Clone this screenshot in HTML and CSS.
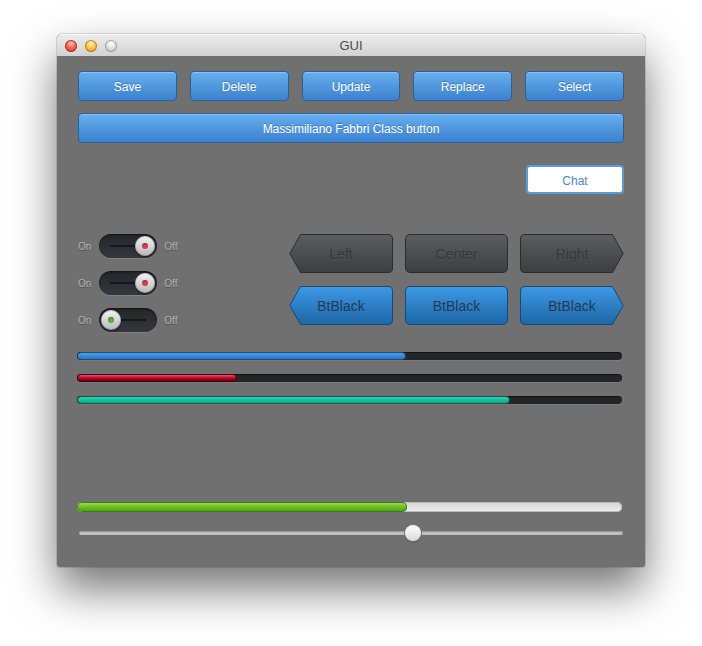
FILE: index.html
```html
<!DOCTYPE html>
<html>
<head>
<meta charset="utf-8">
<title>GUI</title>
<link rel="stylesheet" href="styles.css">
</head>
<body>
<div class="window">
  <div class="titlebar">
    <div class="lights">
      <span class="light red"></span>
      <span class="light yellow"></span>
      <span class="light grey"></span>
    </div>
    <div class="title">GUI</div>
    <div></div>
  </div>
  <div class="content">
    <div class="btn-row">
      <button class="btn">Save</button>
      <button class="btn">Delete</button>
      <button class="btn">Update</button>
      <button class="btn">Replace</button>
      <button class="btn">Select</button>
    </div>
    <button class="btn wide">Massimiliano Fabbri Class button</button>
    <div class="chat-row"><button class="chat">Chat</button></div>

    <div class="mid">
      <div class="toggles">
        <div class="trow">
          <span class="lbl on-lbl">On</span>
          <div class="switch off"><span class="line"></span><span class="knob"><span class="dot red-dot"></span></span></div>
          <span class="lbl off-lbl">Off</span>
        </div>
        <div class="trow">
          <span class="lbl on-lbl">On</span>
          <div class="switch off"><span class="line"></span><span class="knob"><span class="dot red-dot"></span></span></div>
          <span class="lbl off-lbl">Off</span>
        </div>
        <div class="trow">
          <span class="lbl on-lbl">On</span>
          <div class="switch on"><span class="knob"><span class="dot green-dot"></span></span><span class="line"></span></div>
          <span class="lbl off-lbl">Off</span>
        </div>
      </div>
      <div class="segs">
        <button class="seg dark left">Left</button>
        <button class="seg dark center">Center</button>
        <button class="seg dark right">Right</button>
        <button class="seg blue left">BtBlack</button>
        <button class="seg blue center">BtBlack</button>
        <button class="seg blue right">BtBlack</button>
      </div>
    </div>

    <div class="bars">
      <div class="bar"><div class="fill fill-blue" style="width:60.3%"></div></div>
      <div class="bar"><div class="fill fill-red" style="width:29.3%"></div></div>
      <div class="bar"><div class="fill fill-teal" style="width:79.4%"></div></div>
    </div>

    <div class="gbar"><div class="gfill" style="width:60.6%"></div></div>

    <div class="slider">
      <div class="strack"></div>
      <div class="thumb" style="left:calc(61.4% - 8px)"></div>
    </div>
  </div>
</div>
</body>
</html>
```
FILE: styles.css
```css
html, body {
  margin: 0;
}
body {
  background: #ffffff;
  padding: 34px 0 0 57px;
  height: 646px;
  box-sizing: border-box;
  overflow: hidden;
  font-family: "Liberation Sans", Arial, sans-serif;
}

.window {
  width: 588px;
  height: 533px;
  border-radius: 5px 5px 3px 3px;
  background: #707070;
  box-shadow: 0 22px 45px rgba(0, 0, 0, 0.55), 0 0 0 1px rgba(0, 0, 0, 0.12);
  overflow: hidden;
  display: flex;
  flex-direction: column;
}

.titlebar {
  height: 22px;
  flex: none;
  background: linear-gradient(#ededed, #d2d2d2);
  box-shadow: inset 0 1px 0 #f9f9f9;
  display: grid;
  grid-template-columns: 1fr auto 1fr;
  align-items: center;
}
.lights {
  display: flex;
  gap: 8px;
  padding-left: 8px;
}
.light {
  width: 12px;
  height: 12px;
  border-radius: 50%;
  box-sizing: border-box;
}
.light.red {
  background: radial-gradient(circle at 50% 30%, #ffc2ba 0, #f26257 45%, #c9302a 100%);
  box-shadow: inset 0 0 0 1px rgba(140, 25, 15, 0.6);
}
.light.yellow {
  background: radial-gradient(circle at 50% 30%, #fff0b8 0, #f6c24a 45%, #d98c14 100%);
  box-shadow: inset 0 0 0 1px rgba(150, 95, 10, 0.6);
}
.light.grey {
  background: radial-gradient(circle at 50% 30%, #ffffff 0, #e2e2e2 45%, #b2b2b2 100%);
  box-shadow: inset 0 0 0 1px rgba(110, 110, 110, 0.55);
}
.title {
  font-size: 13px;
  color: #4a4a4a;
  line-height: 22px;
  padding-top: 1px;
}

.content {
  padding: 15px 21px 0 21px;
  display: flex;
  flex-direction: column;
}

button {
  font-family: "Liberation Sans", Arial, sans-serif;
  padding: 0;
  margin: 0;
  cursor: default;
}

.btn-row {
  display: grid;
  grid-template-columns: repeat(5, 1fr);
  gap: 13px;
}
.btn {
  height: 30px;
  padding-top: 2px;
  border: 1px solid #2c5f98;
  border-radius: 4px;
  background: linear-gradient(#68aef0, #3b81cd);
  color: #ffffff;
  font-size: 12px;
  text-shadow: 0 -1px 0 rgba(0, 40, 90, 0.3);
  box-shadow: inset 0 1px 0 rgba(255, 255, 255, 0.25);
}
.btn.wide {
  margin-top: 12px;
  width: 100%;
}

.chat-row {
  display: flex;
  justify-content: flex-end;
  margin-top: 22px;
}
.chat {
  width: 98px;
  height: 29px;
  padding-top: 2px;
  background: #ffffff;
  border: 2px solid #5d9bd8;
  border-radius: 4px;
  color: #4a88cc;
  font-size: 12px;
}

.mid {
  margin-top: 40px;
  display: flex;
  justify-content: space-between;
  align-items: flex-start;
}
.toggles {
  display: flex;
  flex-direction: column;
  gap: 13px;
}
.trow {
  display: flex;
  align-items: center;
  height: 24px;
}
.lbl {
  font-size: 10px;
  color: #b6b6b6;
  text-shadow: 0 1px 0 #4c4c4c;
}
.on-lbl {
  margin-right: 8px;
}
.off-lbl {
  margin-left: 7px;
}
.switch {
  width: 58px;
  height: 24px;
  box-sizing: border-box;
  border-radius: 12px;
  background: linear-gradient(#24272a, #34373b);
  box-shadow: inset 0 1px 2px rgba(0, 0, 0, 0.6), 0 1px 0 rgba(255, 255, 255, 0.12);
  display: flex;
  align-items: center;
}
.switch.off {
  padding: 0 2px 0 11px;
}
.switch.on {
  padding: 0 11px 0 2px;
}
.line {
  flex: 1;
  height: 2px;
  background: #141618;
}
.knob {
  width: 20px;
  height: 20px;
  border-radius: 50%;
  background: linear-gradient(#f4f4f4, #b8b8b8);
  box-shadow: 0 1px 2px rgba(0, 0, 0, 0.55), inset 0 0 0 1px rgba(0, 0, 0, 0.15);
  display: flex;
  align-items: center;
  justify-content: center;
}
.dot {
  width: 6px;
  height: 6px;
  border-radius: 50%;
  box-shadow: inset 0 1px 1px rgba(0, 0, 0, 0.3);
}
.red-dot {
  background: #d8403f;
}
.green-dot {
  background: #5aae3a;
}

.segs {
  display: grid;
  grid-template-columns: 104px 103px 104px;
  gap: 13px 12px;
}
.seg {
  height: 39px;
  padding-top: 1px;
  font-size: 14px;
  border: 0;
  background-color: transparent;
  background-size: 100% 100%;
  background-repeat: no-repeat;
  display: flex;
  align-items: center;
  justify-content: center;
}
.seg.dark {
  color: #35383b;
  text-shadow: 0 1px 0 rgba(255, 255, 255, 0.06);
}
.seg.blue {
  color: #26394d;
}
.seg.center {
  border-radius: 5px;
}
.seg.dark.center {
  border: 1px solid #2a2c2e;
  background: linear-gradient(#5b5e61, #3c3f42);
}
.seg.blue.center {
  border: 1px solid #1b4874;
  background: linear-gradient(#3d99e5, #1c67a7);
}
.seg.dark.left {
  background-image: url("data:image/svg+xml;utf8,<svg xmlns='http://www.w3.org/2000/svg' viewBox='0 0 104 39' preserveAspectRatio='none'><defs><linearGradient id='g' x1='0' y1='0' x2='0' y2='1'><stop offset='0' stop-color='%235b5e61'/><stop offset='1' stop-color='%233c3f42'/></linearGradient></defs><path d='M11.5 0.5 H99 Q103.5 0.5 103.5 5 V34 Q103.5 38.5 99 38.5 H11.5 L0.8 19.5 Z' fill='url(%23g)' stroke='%232a2c2e'/></svg>");
}
.seg.dark.right {
  background-image: url("data:image/svg+xml;utf8,<svg xmlns='http://www.w3.org/2000/svg' viewBox='0 0 104 39' preserveAspectRatio='none'><defs><linearGradient id='g' x1='0' y1='0' x2='0' y2='1'><stop offset='0' stop-color='%235b5e61'/><stop offset='1' stop-color='%233c3f42'/></linearGradient></defs><path d='M0.5 5 Q0.5 0.5 5 0.5 H92.5 L103.2 19.5 L92.5 38.5 H5 Q0.5 38.5 0.5 34 Z' fill='url(%23g)' stroke='%232a2c2e'/></svg>");
}
.seg.blue.left {
  background-image: url("data:image/svg+xml;utf8,<svg xmlns='http://www.w3.org/2000/svg' viewBox='0 0 104 39' preserveAspectRatio='none'><defs><linearGradient id='g' x1='0' y1='0' x2='0' y2='1'><stop offset='0' stop-color='%233d99e5'/><stop offset='1' stop-color='%231c67a7'/></linearGradient></defs><path d='M11.5 0.5 H99 Q103.5 0.5 103.5 5 V34 Q103.5 38.5 99 38.5 H11.5 L0.8 19.5 Z' fill='url(%23g)' stroke='%231b4874'/></svg>");
}
.seg.blue.right {
  background-image: url("data:image/svg+xml;utf8,<svg xmlns='http://www.w3.org/2000/svg' viewBox='0 0 104 39' preserveAspectRatio='none'><defs><linearGradient id='g' x1='0' y1='0' x2='0' y2='1'><stop offset='0' stop-color='%233d99e5'/><stop offset='1' stop-color='%231c67a7'/></linearGradient></defs><path d='M0.5 5 Q0.5 0.5 5 0.5 H92.5 L103.2 19.5 L92.5 38.5 H5 Q0.5 38.5 0.5 34 Z' fill='url(%23g)' stroke='%231b4874'/></svg>");
}

.bars {
  margin-top: 20px;
  margin-left: -1px;
  margin-right: 2px;
  display: flex;
  flex-direction: column;
  gap: 14px;
}
.bar {
  height: 8px;
  border-radius: 4px;
  background: #222629;
  box-shadow: inset 0 1px 1px rgba(0, 0, 0, 0.5), 0 1px 0 rgba(255, 255, 255, 0.08);
  overflow: hidden;
}
.fill {
  height: 100%;
  border-radius: 4px;
  box-sizing: border-box;
}
.fill-blue {
  background: linear-gradient(#4d9de3, #2a77c3);
  border: 1px solid #1d4d7e;
}
.fill-red {
  background: linear-gradient(#f04a78, #b3122e 45%, #6e0010);
  border: 1px solid #4c0008;
}
.fill-teal {
  background: linear-gradient(#2fd2b4, #14a286);
  border: 1px solid #0c5a4c;
}

.gbar {
  margin-top: 98px;
  margin-left: -1px;
  margin-right: 2px;
  height: 10px;
  border-radius: 5px;
  background: linear-gradient(#d4d4d4, #efefef);
  box-shadow: inset 0 0 0 1px #bcbcbc;
  overflow: hidden;
}
.gfill {
  height: 100%;
  border-radius: 5px;
  background: linear-gradient(#a8e256, #6dbd29 50%, #4f9a15);
  box-shadow: inset 0 0 0 1px #3d7b11;
}

.slider {
  margin-top: 13px;
  margin-left: 1px;
  margin-right: 1px;
  height: 16px;
  position: relative;
  display: flex;
  align-items: center;
}
.strack {
  flex: 1;
  height: 4px;
  border-radius: 2px;
  background: linear-gradient(#a9a9a9, #d9d9d9);
  box-shadow: inset 0 0 0 1px rgba(0, 0, 0, 0.12);
}
.thumb {
  position: absolute;
  top: 0;
  width: 16px;
  height: 16px;
  border-radius: 50%;
  background: linear-gradient(#ffffff, #dadada);
  box-shadow: 0 0 0 1px #777777, 0 1px 2px rgba(0, 0, 0, 0.4);
}
```
